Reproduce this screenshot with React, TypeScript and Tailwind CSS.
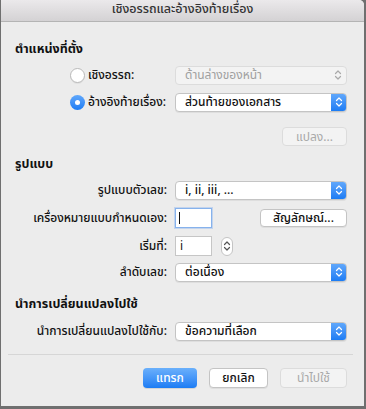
import React from "react";

const font = { fontFamily: '"Noto Sans Thai", "Noto Sans", "Liberation Sans", sans-serif' };

function Chevrons({ color = "#fff" }: { color?: string }) {
  return (
    <svg width="8" height="12" viewBox="0 0 8 12" fill="none">
      <path d="M1.5 4.5 L4 2 L6.5 4.5" stroke={color} strokeWidth="1.2" strokeLinecap="round" strokeLinejoin="round" />
      <path d="M1.5 7.5 L4 10 L6.5 7.5" stroke={color} strokeWidth="1.2" strokeLinecap="round" strokeLinejoin="round" />
    </svg>
  );
}

function Popup({ text, disabled = false }: { text: string; disabled?: boolean }) {
  if (disabled) {
    return (
      <div className="flex h-[19px] w-[172px] items-center justify-between rounded-[4px] border border-[#dcdcdc] bg-[#f3f3f3] pl-[9px] pr-[4px] text-[12px] text-[#a0a0a0]">
        <span className="leading-none">{text}</span>
        <Chevrons color="#a9a9a9" />
      </div>
    );
  }
  return (
    <div className="flex h-[19px] w-[172px] items-center justify-between overflow-hidden rounded-[4px] border border-[#c4c4c4] bg-white pl-[9px] text-[12px] font-medium text-[#111] shadow-[0_1px_0_rgba(0,0,0,0.06)]">
      <span className="leading-none">{text}</span>
      <div className="flex h-full w-[15px] items-center justify-center bg-gradient-to-b from-[#5fa7fb] to-[#1b7cf4]">
        <Chevrons />
      </div>
    </div>
  );
}

function Label({ children }: { children: React.ReactNode }) {
  return <div className="w-[166px] shrink-0 text-right text-[12px] font-medium text-[#111]">{children}</div>;
}

export default function App() {
  return (
    <div className="h-[409px] w-[366px] bg-[#6f6f6f]" style={font}>
      <div className="ml-[1px] h-[406px] w-[363px] overflow-hidden rounded-tr-[5px] bg-[#ececec]">
        <div className="flex h-[22px] items-center justify-center border-b border-[#b4b4b4] bg-gradient-to-b from-[#ebe9eb] to-[#d4d2d4] text-[12.5px] font-medium text-[#333]">
          เชิงอรรถและอ้างอิงท้ายเรื่อง
        </div>

        <div className="ml-[14px] mt-[20px] h-[16px] text-[12.5px] font-bold leading-[16px] text-[#111]">ตำแหน่งที่ตั้ง</div>

        <div className="mt-[7px] flex h-[20px] items-center">
          <div className="ml-[69px] flex w-[97px] items-center gap-[3px]">
            <div className="h-[15px] w-[15px] rounded-full border border-[#b9b9b9] bg-white shadow-[0_1px_0_rgba(0,0,0,0.05)]" />
            <span className="text-[12px] font-medium text-[#111]">เชิงอรรถ:</span>
          </div>
          <div className="ml-[8px]">
            <Popup text="ด้านล่างของหน้า" disabled />
          </div>
        </div>

        <div className="mt-[7px] flex h-[20px] items-center">
          <div className="ml-[69px] flex w-[97px] items-center gap-[3px]">
            <div className="flex h-[15px] w-[15px] items-center justify-center rounded-full bg-gradient-to-b from-[#5fa7fb] to-[#1b7cf4]">
              <div className="h-[5px] w-[5px] rounded-full bg-white" />
            </div>
            <span className="whitespace-nowrap text-[12px] font-medium text-[#111]">อ้างอิงท้ายเรื่อง:</span>
          </div>
          <div className="ml-[8px]">
            <Popup text="ส่วนท้ายของเอกสาร" />
          </div>
        </div>

        <div className="mt-[15px] flex justify-end pr-[17px]">
          <div className="flex h-[19px] w-[65px] items-center justify-center rounded-[4px] border border-[#dcdcdc] bg-[#f3f3f3] text-[12px] text-[#a9a9a9]">
            แปลง...
          </div>
        </div>

        <div className="ml-[14px] mt-[11px] h-[16px] text-[12.5px] font-bold leading-[16px] text-[#111]">รูปแบบ</div>

        <div className="mt-[7px] flex h-[20px] items-center">
          <Label>รูปแบบตัวเลข:</Label>
          <div className="ml-[8px]">
            <Popup text="i, ii, iii, ..." />
          </div>
        </div>

        <div className="mt-[8px] flex h-[20px] items-center">
          <Label>เครื่องหมายแบบกำหนดเอง:</Label>
          <div className="ml-[8px] flex h-[20px] w-[37px] items-center border border-[#86b2ec] bg-white pl-[3px] shadow-[0_0_0_1px_rgba(120,170,240,0.35)]">
            <div className="h-[12px] w-[1px] bg-[#111]" />
          </div>
          <div className="ml-[48px] flex h-[18px] w-[87px] items-center justify-center rounded-[4px] border border-[#c4c4c4] bg-white text-[12px] font-medium text-[#111] shadow-[0_1px_0_rgba(0,0,0,0.06)]">
            สัญลักษณ์...
          </div>
        </div>

        <div className="mt-[8px] flex h-[20px] items-center">
          <Label>เริ่มที่:</Label>
          <div className="ml-[8px] flex h-[20px] w-[37px] items-center border border-[#c6c6c6] bg-white pl-[4px] text-[12px] text-[#111]">
            i
          </div>
          <div className="ml-[9px] flex h-[19px] w-[12px] items-center justify-center rounded-[6px] border border-[#c4c4c4] bg-white">
            <Chevrons color="#555" />
          </div>
        </div>

        <div className="mt-[6px] flex h-[20px] items-center">
          <Label>ลำดับเลข:</Label>
          <div className="ml-[8px]">
            <Popup text="ต่อเนื่อง" />
          </div>
        </div>

        <div className="ml-[14px] mt-[15px] h-[16px] text-[12.5px] font-bold leading-[16px] text-[#111]">นำการเปลี่ยนแปลงไปใช้</div>

        <div className="mt-[8px] flex h-[20px] items-center">
          <Label>นำการเปลี่ยนแปลงไปใช้กับ:</Label>
          <div className="ml-[8px]">
            <Popup text="ข้อความที่เลือก" />
          </div>
        </div>

        <div className="ml-[7px] mt-[13px] h-[1px] w-[345px] bg-[#d6d6d6]" />

        <div className="mt-[13px] flex h-[20px] items-center">
          <div className="ml-[142px] flex h-[20px] w-[54px] items-center justify-center rounded-[4px] bg-gradient-to-b from-[#6ab0fb] to-[#1a7cf4] text-[12px] font-medium text-white shadow-[0_1px_0_rgba(0,0,0,0.1)]">
            แทรก
          </div>
          <div className="ml-[12px] flex h-[20px] w-[59px] items-center justify-center rounded-[4px] border border-[#c4c4c4] bg-white text-[12px] font-medium text-[#111] shadow-[0_1px_0_rgba(0,0,0,0.06)]">
            ยกเลิก
          </div>
          <div className="ml-[12px] flex h-[20px] w-[67px] items-center justify-center rounded-[4px] border border-[#dcdcdc] bg-[#f3f3f3] text-[12px] text-[#a9a9a9]">
            นำไปใช้
          </div>
        </div>
      </div>
    </div>
  );
}
